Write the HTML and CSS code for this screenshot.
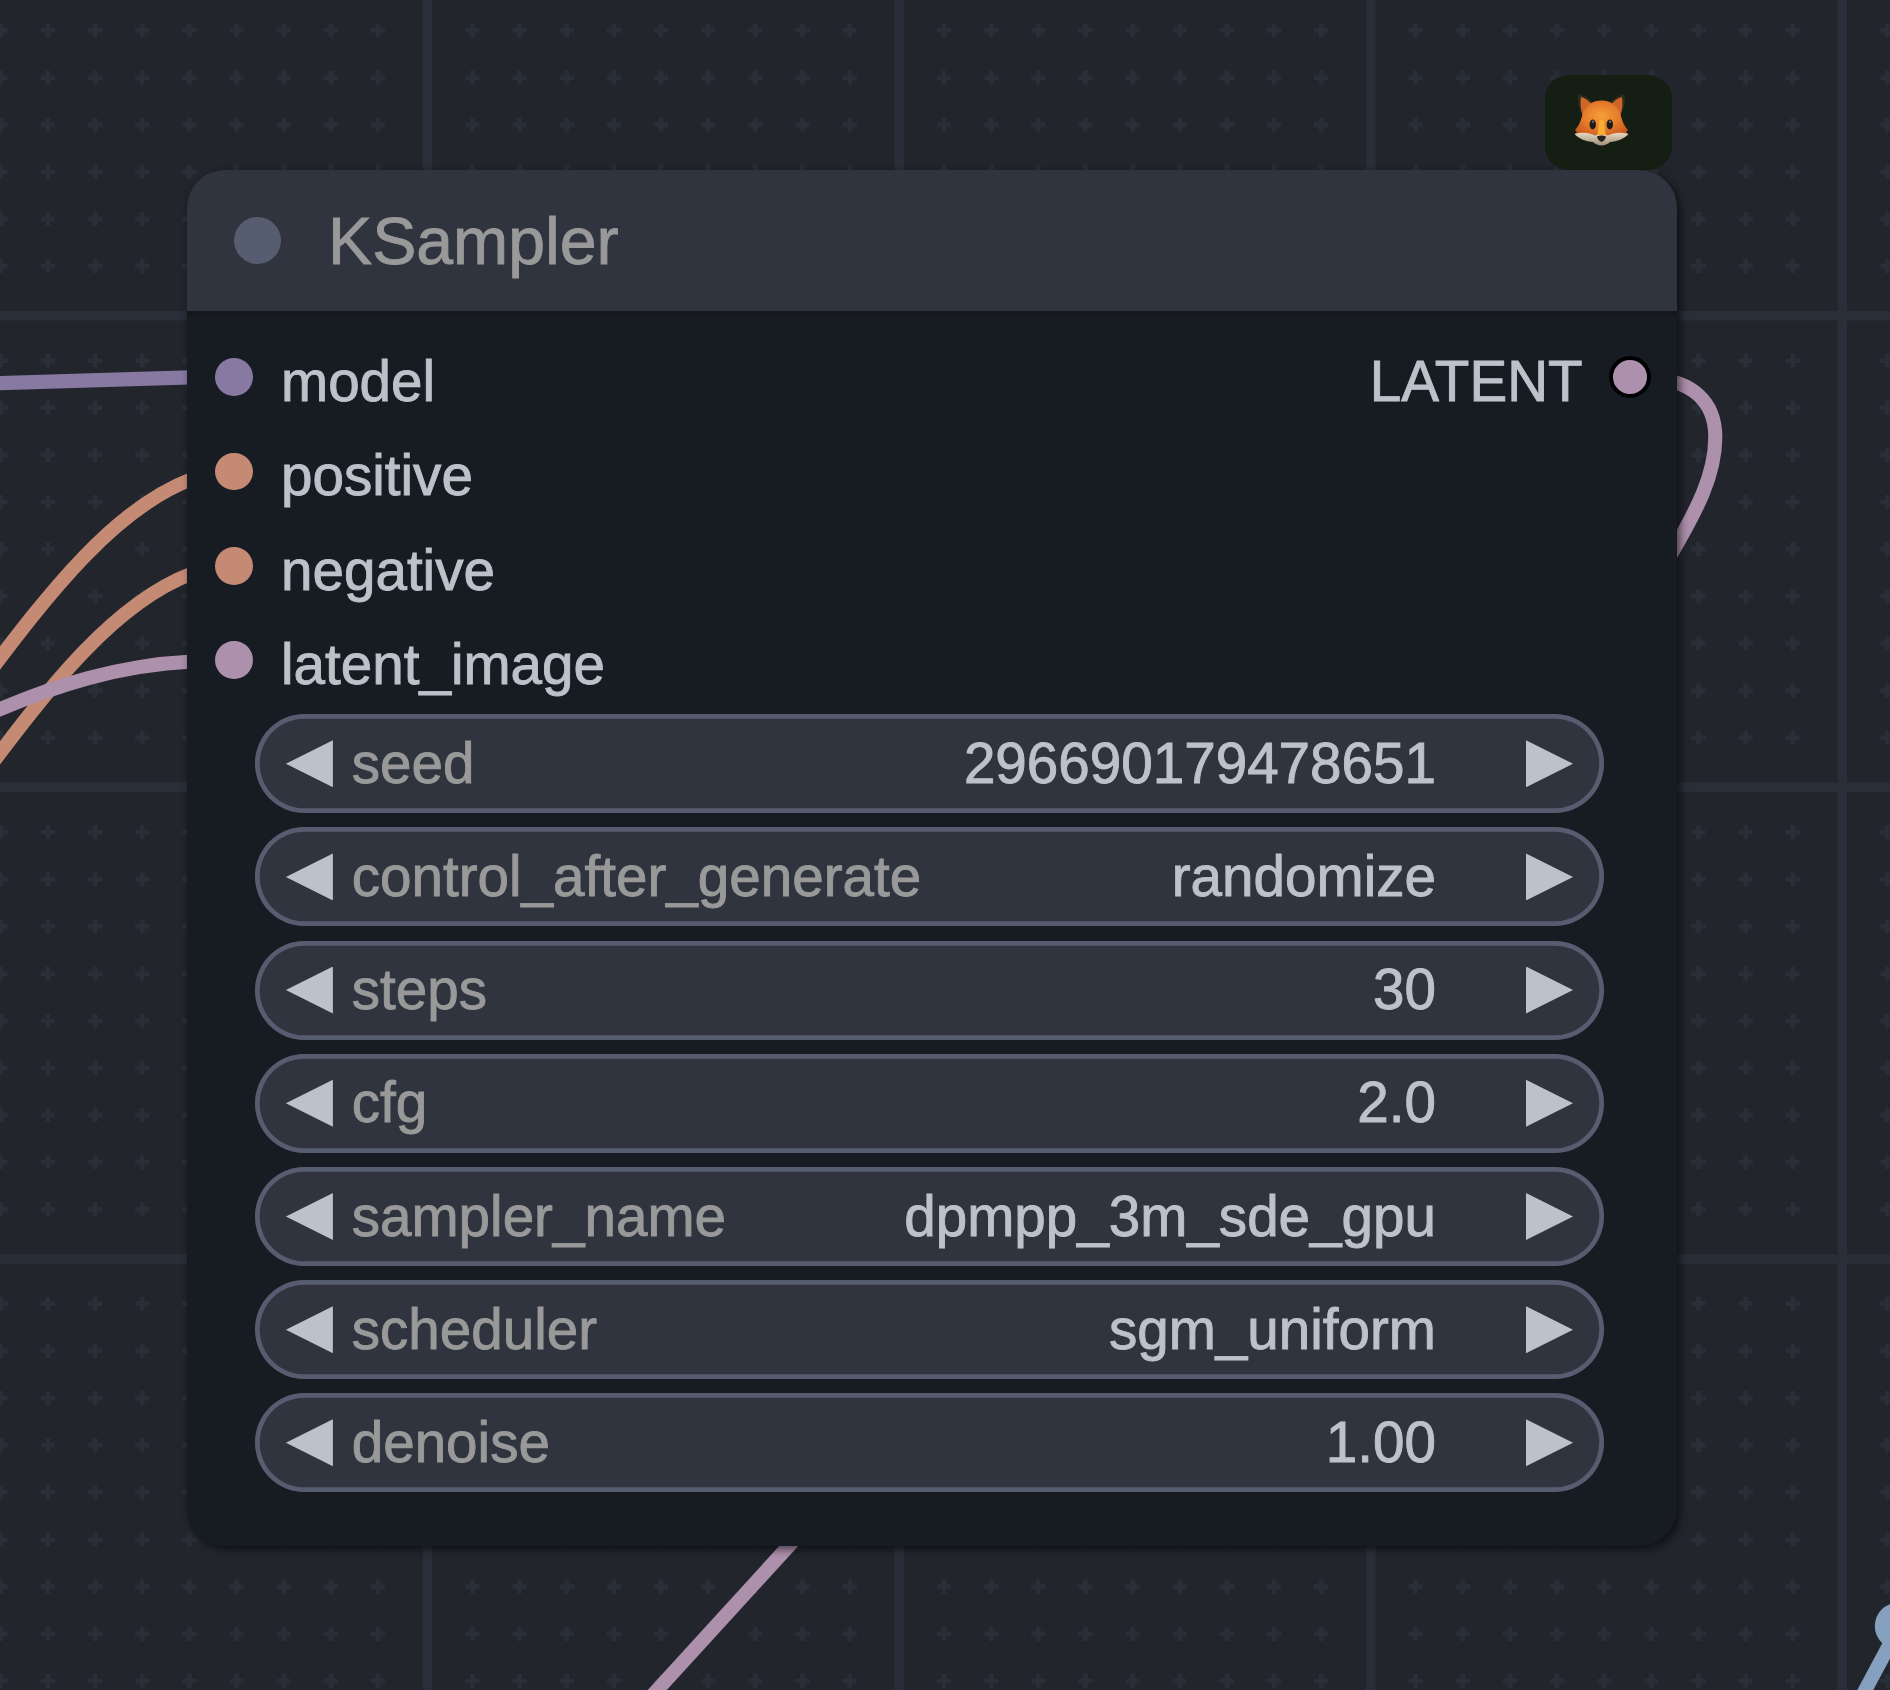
FILE: index.html
```html
<!DOCTYPE html>
<html lang="en">
<head>
<meta charset="utf-8">
<title>KSampler</title>
<link rel="stylesheet" href="styles.css">
</head>
<body>
<main class="graph">
  <svg class="layer" viewBox="0 0 1890 1690" aria-hidden="true">
    <g id="grid" class="grid"></g>
    <g class="links">
      <path class="link model" d="M-10 383.4 Q90 380 190 377.4"/>
      <path class="link conditioning" d="M-20 684.500 C50 591 115 508 192 479"/>
      <path class="link conditioning" d="M-20 779.500 C50 685.500 115 602.500 192 573.500"/>
      <path class="link latent" d="M-10 713.5 C55 685 120 665 192 661.5"/>
      <path class="link latent" d="M1655 379 C1690 381 1715.3 400 1715.3 437 C1715.3 475 1697 510 1670 556"/>
      <path class="link latent" d="M807 1526 L639 1710"/>
      <path class="link image" d="M1899 1627 L1854 1711"/>
      <circle class="reroute" cx="1898" cy="1626" r="23.2"/>
    </g>
  </svg>

  <section class="node">
    <div class="badge">
      <svg class="fox" viewBox="0 0 55 52" aria-hidden="true">
        <defs>
          <radialGradient id="fur" cx=".5" cy=".42" r=".6">
            <stop offset="0" stop-color="#f5a037"/>
            <stop offset=".55" stop-color="#e67c2c"/>
            <stop offset="1" stop-color="#c9581c"/>
          </radialGradient>
          <linearGradient id="muzzle" x1="0" y1="0" x2="0" y2="1">
            <stop offset="0" stop-color="#e6d8c4"/>
            <stop offset="1" stop-color="#a08f78"/>
          </linearGradient>
        </defs>
        <path fill="#2c2b24" d="M4.5 0 C10 1 15 4 18.5 8 L9 22 C5 16 3.5 8 4.5 0Z M50.500 0 C45 1 40 4 36.500 8 L46 22 C50 16 51.500 8 50.500 0Z"/>
        <path fill="#cf6526" d="M7 3 C11 4 15 7 17.500 10 L9 22 C6.500 16 6 9 7 3Z M48 3 C44 4 40 7 37.500 10 L46 22 C48.500 16 49 9 48 3Z"/>
        <path fill="url(#fur)" d="M27.500 6.500 C19 6.500 12 11 9 19 C7 25 6 31 1 36 L3 38 L1 40 C8 43 17 44 27.500 44 C38 44 47 43 54 40 L52 38 L54 36 C49 31 48 25 46 19 C43 11 36 6.500 27.500 6.500Z"/>
        <path fill="url(#muzzle)" d="M.5 40 C8 38 15 38.500 21 41.500 L27.500 39 L34 41.500 C40 38.500 47 38 54.500 40 C50 45 43 47.500 36 48 C32 52.500 23 52.500 19 48 C12 47.500 5 45 .5 40Z"/>
        <path fill="#f6ae32" d="M25 27 Q27.500 25 30 27 L31.500 41 H23.500Z"/>
        <ellipse fill="#1c1b1a" cx="18.700" cy="30.500" rx="3.200" ry="5"/>
        <ellipse fill="#1c1b1a" cx="35.800" cy="30.500" rx="3.200" ry="5"/>
        <ellipse fill="#66696b" cx="18.900" cy="27.800" rx="1.200" ry="1.300"/>
        <ellipse fill="#66696b" cx="36" cy="27.800" rx="1.200" ry="1.300"/>
        <path fill="#272320" d="M23 42.500 Q27.500 40.500 32 42.500 Q31.500 46 27.500 48 Q23.500 46 23 42.500Z"/>
      </svg>
    </div>
    <header class="node-header">
      <span class="node-state"></span>
      <h1 class="node-title">KSampler</h1>
    </header>
    <div class="node-body">
      <div class="slots">
        <ul class="slot-list">
          <li class="slot"><span class="port port-model"></span><span class="slot-label">model</span></li>
          <li class="slot"><span class="port port-conditioning"></span><span class="slot-label">positive</span></li>
          <li class="slot"><span class="port port-conditioning"></span><span class="slot-label">negative</span></li>
          <li class="slot"><span class="port port-latent"></span><span class="slot-label">latent_image</span></li>
        </ul>
        <ul class="slot-list">
          <li class="slot slot-out"><span class="slot-label">LATENT</span><span class="port port-latent port-connected"></span></li>
        </ul>
      </div>
      <div class="widgets">
        <div class="widget"><span class="arrow arrow-left"></span><span class="name">seed</span><span class="value">296690179478651</span><span class="arrow arrow-right"></span></div>
        <div class="widget"><span class="arrow arrow-left"></span><span class="name">control_after_generate</span><span class="value">randomize</span><span class="arrow arrow-right"></span></div>
        <div class="widget"><span class="arrow arrow-left"></span><span class="name">steps</span><span class="value">30</span><span class="arrow arrow-right"></span></div>
        <div class="widget"><span class="arrow arrow-left"></span><span class="name">cfg</span><span class="value">2.0</span><span class="arrow arrow-right"></span></div>
        <div class="widget"><span class="arrow arrow-left"></span><span class="name">sampler_name</span><span class="value">dpmpp_3m_sde_gpu</span><span class="arrow arrow-right"></span></div>
        <div class="widget"><span class="arrow arrow-left"></span><span class="name">scheduler</span><span class="value">sgm_uniform</span><span class="arrow arrow-right"></span></div>
        <div class="widget"><span class="arrow arrow-left"></span><span class="name">denoise</span><span class="value">1.00</span><span class="arrow arrow-right"></span></div>
      </div>
    </div>
  </section>
</main>
<script src="grid.js"></script>
</body>
</html>
```

FILE: styles.css
```css
* {
  box-sizing: border-box;
}

body {
  margin: 0;
  background: #22252c;
  font-family: "Liberation Sans", Arial, sans-serif;
  -webkit-text-stroke: 0.900px currentColor;
}

.graph {
  position: relative;
  width: 1890px;
  height: 1690px;
  overflow: hidden;
}

.layer {
  display: block;
  width: 1890px;
  height: 1690px;
}

.grid {
  fill: #2a2e38;
}

.link {
  fill: none;
  stroke-width: 14.1px;
}

.model { stroke: #8879a3; }
.conditioning { stroke: #c58a74; }
.latent { stroke: #ad90ac; }
.image { stroke: #86a1c0; }
.reroute { fill: #86a1c0; }

.node {
  position: absolute;
  left: 187px;
  top: 169.500px;
  width: 1490px;
  height: 1376.500px;
  display: flex;
  flex-direction: column;
  border-radius: 37.700px;
  background: #171b22;
  box-shadow: 3px 3px 8px rgba(0, 0, 0, 0.6);
}

.badge {
  position: absolute;
  right: 4.700px;
  bottom: 100%;
  width: 127.300px;
  height: 94.300px;
  padding: 18.500px 0 0 29px;
  border-radius: 23.600px;
  background: #141e12;
}

.fox {
  display: block;
  width: 55px;
  height: 52px;
}

.node-header {
  display: flex;
  align-items: center;
  gap: 47px;
  flex: none;
  height: 141.500px;
  padding-left: 46.800px;
  border-radius: 37.700px 37.700px 0 0;
  background: #30343f;
}

.node-state {
  width: 47.200px;
  height: 47.200px;
  border-radius: 50%;
  background: #575d70;
}

.node-title {
  margin: 0;
  padding-top: 2px;
  font-size: 66.200px;
  font-weight: 400;
  color: #999;
}

.node-body {
  flex: 1;
  padding-top: 14px;
  border-top: 5px solid #14171b;
}

.slots {
  display: flex;
  justify-content: space-between;
  padding: 0 28px;
}

.slot-list {
  margin: 0;
  padding: 0;
  list-style: none;
}

.slot {
  display: flex;
  align-items: center;
  gap: 28.200px;
  height: 94.300px;
}

.slot-out {
  gap: 26px;
  margin-right: -2px;
}

.slot-label {
  padding-top: 10.500px;
  font-size: 56.600px;
  line-height: 1;
  color: #bdc2ca;
}

.port {
  width: 37.800px;
  height: 37.800px;
  border-radius: 50%;
}

.port-model { background: #8879a3; }
.port-conditioning { background: #c58a74; }
.port-latent { background: #ad90ac; }

.port-connected {
  width: 42.400px;
  height: 42.400px;
  border: 4.700px solid #000;
}

.widgets {
  display: flex;
  flex-direction: column;
  gap: 14.200px;
  width: 1348.300px;
  margin: 7px 0 0 68.300px;
}

.widget {
  display: flex;
  align-items: center;
  height: 99px;
  padding: 0 30.600px 0 30.600px;
  border-radius: 49.500px;
  background: #30343f;
  box-shadow: inset 0 0 0 4.700px #575d70;
  font-size: 56.600px;
  line-height: 1;
}

.arrow {
  flex: none;
  width: 47px;
  height: 47px;
  background: #bdc2ca;
}

.arrow-left {
  clip-path: polygon(100% 0, 100% 100%, 0 50%);
}

.arrow-right {
  clip-path: polygon(0 0, 100% 50%, 0 100%);
}

.name,
.value {
  padding-top: 1px;
}

.name {
  margin-left: 18.800px;
  color: #999;
}

.value {
  margin: 0 90px 0 auto;
  color: #bdc2ca;
}
```

FILE: grid.js
```js
const NS = "http://www.w3.org/2000/svg";
const grid = document.getElementById("grid");
const unit = 4.716;
const originX = 422.85;
const originY = 311;
let crosses = "";
let lines = "";

for (let i = -10; i <= 32; i++) {
  const x = originX + i * 10 * unit;
  if (i % 10 === 0) {
    lines += `M${x} 0h${2 * unit}V1690h${-2 * unit}Z`;
    continue;
  }
  for (let j = -10; j <= 30; j++) {
    if (j % 10 === 0) continue;
    const y = originY + j * 10 * unit;
    crosses += `M${x} ${y - unit}h${unit}v${unit}h${unit}v${unit}h${-unit}v${unit}h${-unit}v${-unit}h${-unit}v${-unit}h${unit}Z`;
  }
}
for (let j = 0; j <= 20; j += 10) {
  const y = originY + j * 10 * unit;
  lines += `M0 ${y}H1890v${2 * unit}H0Z`;
}

for (const d of [crosses, lines]) {
  const path = document.createElementNS(NS, "path");
  path.setAttribute("d", d);
  grid.appendChild(path);
}
```
